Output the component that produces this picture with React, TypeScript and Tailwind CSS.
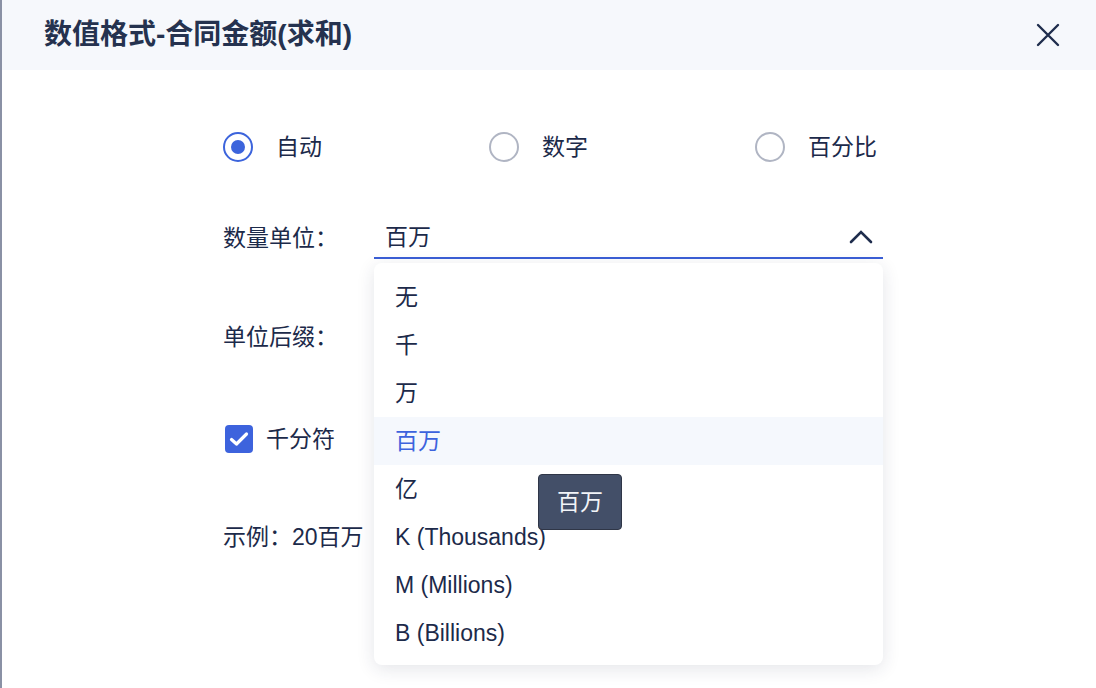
import { useState } from "react";

const FONT = "'Liberation Sans', 'Noto Sans CJK SC', sans-serif";

const UNITS = ["无", "千", "万", "百万", "亿", "K (Thousands)", "M (Millions)", "B (Billions)"];

function Radio({ checked, label }: { checked?: boolean; label: string }) {
  return (
    <div className="flex items-center gap-[23px]">
      <span
        className={`flex h-[30px] w-[30px] items-center justify-center rounded-full border-2 ${
          checked ? "border-[#3c64dc]" : "border-[#b0b5c3]"
        }`}
      >
        {checked && <span className="h-[14px] w-[14px] rounded-full bg-[#3c64dc]" />}
      </span>
      <span>{label}</span>
    </div>
  );
}

export default function App() {
  const [selected] = useState("百万");

  return (
    <div
      className="relative h-[688px] w-[1096px] overflow-hidden border-l-2 border-[#8a91a5] bg-white text-[23px] text-[#1c2a4a]"
      style={{ fontFamily: FONT }}
    >
      {/* Header */}
      <div className="flex h-[70px] items-center justify-between bg-[#f6f8fc] pl-[42px] pr-[36px]">
        <h1 className="text-[28px] font-bold text-[#25324f]">数值格式-合同金额(求和)</h1>
        <svg width="24" height="24" viewBox="0 0 24 24" className="text-[#1f2d4d]">
          <path d="M2 2 L22 22 M22 2 L2 22" stroke="currentColor" strokeWidth="2.4" strokeLinecap="round" />
        </svg>
      </div>

      {/* Form */}
      <div className="flex flex-col pl-[221px]">
        <div className="mt-[61px] flex h-[32px] items-center">
          <div className="w-[266px]">
            <Radio checked label="自动" />
          </div>
          <div className="w-[266px]">
            <Radio label="数字" />
          </div>
          <Radio label="百分比" />
        </div>

        <div className="mt-[54px] flex h-[42px] items-stretch">
          <div className="flex w-[151px] items-center">数量单位：</div>
          <div className="flex w-[509px] items-center justify-between border-b-2 border-[#3b5fd6] pl-[11px] pr-[10px]">
            <span>{selected}</span>
            <svg width="24" height="14" viewBox="0 0 24 14" className="text-[#1f2d4d]">
              <path d="M2 12 L12 2 L22 12" fill="none" stroke="currentColor" strokeWidth="2.6" strokeLinecap="round" />
            </svg>
          </div>
        </div>

        <div className="mt-[58px] flex h-[40px] items-stretch">
          <div className="flex w-[151px] items-center">单位后缀：</div>
          <div className="w-[509px] border-b border-[#d3d7e0]" />
        </div>

        <div className="mt-[68px] flex h-[28px] items-center gap-[13px] pl-[2px]">
          <span className="flex h-[28px] w-[28px] items-center justify-center rounded-[4px] bg-[#3d63dd]">
            <svg width="20" height="16" viewBox="0 0 20 16">
              <path d="M2.5 8.5 L7.5 13 L17.5 3" fill="none" stroke="white" strokeWidth="3.2" strokeLinecap="round" strokeLinejoin="round" />
            </svg>
          </span>
          <span>千分符</span>
        </div>

        <div className="mt-[68px] flex h-[32px] items-center">示例：20百万</div>
      </div>

      {/* Dropdown menu */}
      <div className="absolute left-[372px] top-[263px] w-[509px] rounded-lg bg-white pb-[8px] pt-[10px] shadow-[0_4px_18px_rgba(30,40,70,0.12)]">
        {UNITS.map((u) => (
          <div
            key={u}
            className={`flex h-[48px] items-center px-[21px] ${
              u === selected ? "bg-[#f5f8fd] text-[#3d63dd]" : ""
            }`}
          >
            {u}
          </div>
        ))}
      </div>

      {/* Tooltip */}
      <div className="absolute left-[536px] top-[474px] flex h-[56px] w-[84px] items-center justify-center rounded-[4px] border border-[#2f3647] bg-[#434f68] text-[#f2f4f8]">
        百万
      </div>
    </div>
  );
}
